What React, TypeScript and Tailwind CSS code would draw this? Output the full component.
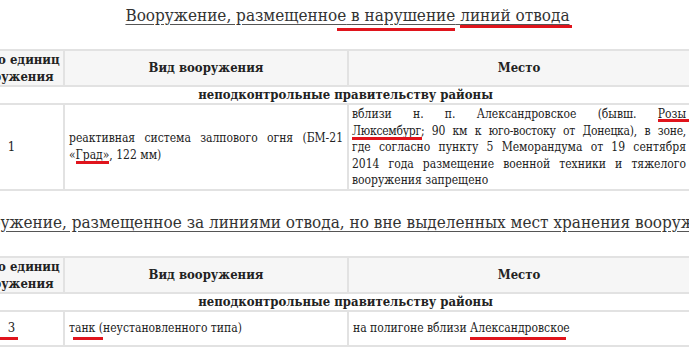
import React from 'react';

type Row = { count: React.ReactNode; kind: React.ReactNode; place: React.ReactNode; tall?: boolean };

// red marker lines drawn over the text
function Mark({ children, line }: { children: React.ReactNode; line: string }) {
  return (
    <span className="relative">
      {children}
      <span className={`absolute h-[3px] bg-[#e0141c] ${line}`} />
    </span>
  );
}

// one justified line of a cell
function J({ children, tight }: { children: React.ReactNode; tight?: boolean }) {
  return (
    <span className={tight ? 'block whitespace-nowrap tracking-[-0.25px] text-justify [text-align-last:justify]' : 'block text-justify [text-align-last:justify]'}>
      {children}
    </span>
  );
}

function Title({ children }: { children: React.ReactNode }) {
  return (
    <div className="flex justify-center pl-[6px]">
      <h2 className="shrink-0 whitespace-nowrap text-[17px] leading-[22px] text-[#333] underline underline-offset-[3px] decoration-[#555]">
        {children}
      </h2>
    </div>
  );
}

function ArmsTable({ row }: { row: Row }) {
  const cell = 'border-2 border-[#e2e2e2]';
  return (
    <div className="-ml-[42px]">
      <table className="w-[731px] table-fixed border-collapse text-[12px] text-[#222]">
        <colgroup>
          <col className="w-[105px]" />
          <col className="w-[284px]" />
          <col className="w-[342px]" />
        </colgroup>
        <thead>
          <tr className="h-[35px] bg-[#f6f6f6] text-[13px]">
            <th className={`${cell} p-0 text-center font-bold leading-[17px]`}>
              Число единиц
              <br />
              вооружения
            </th>
            <th className={`${cell} p-0 text-center font-bold`}>Вид вооружения</th>
            <th className={`${cell} p-0 text-center font-bold`}>Место</th>
          </tr>
        </thead>
        <tbody>
          <tr className="h-[18px] text-[13px]">
            <td colSpan={3} className="p-0 pl-[42px] text-center font-bold leading-[16px]">
              неподконтрольные правительству районы
            </td>
          </tr>
          <tr className={row.tall ? '' : 'h-[35px]'}>
            <td className={`${cell} p-0 text-center align-middle text-[13px]`}>{row.count}</td>
            <td className={`${cell} px-[4px] py-0 align-middle leading-[16.5px]`}>{row.kind}</td>
            <td className={`${cell} px-[3px] pt-[1px] pb-0 align-middle leading-[16.5px]`}>{row.place}</td>
          </tr>
        </tbody>
      </table>
    </div>
  );
}

export default function App() {
  return (
    <div className="w-[689px] h-[349px] overflow-hidden bg-white font-['DejaVu_Serif_Condensed','DejaVu_Serif',serif] font-stretch-condensed">
      <div className="pt-[4px]">
        <Title>
          Вооружение, размещенное{' '}
          <Mark line="-left-[14px] right-0 -bottom-[6px]">в нарушение</Mark>{' '}
          <Mark line="left-0 -right-[2px] -bottom-[3px]">линий отвода</Mark>
        </Title>
      </div>

      <div className="mt-[23px]">
        <ArmsTable
          row={{
            tall: true,
            count: '1',
            kind: (
              <>
                <J>реактивная система залпового огня (БМ-21</J>
                <span className="block">
                  «<Mark line="left-0 right-0 -bottom-[2px]">Град»</Mark>, 122 мм)
                </span>
              </>
            ),
            place: (
              <>
                <J>
                  вблизи н. п. Александровское (бывш.{' '}
                  <Mark line="left-0 -right-[8px] -bottom-[1px]">Розы</Mark>
                </J>
                <J tight>
                  <Mark line="left-0 right-[2px] -bottom-[2px]">Люксембург;</Mark> 90 км к юго-востоку от Донецка), в зоне,
                </J>
                <J>где согласно пункту 5 Меморандума от 19 сентября</J>
                <J>2014 года размещение военной техники и тяжелого</J>
                <span className="block">вооружения запрещено</span>
              </>
            ),
          }}
        />
      </div>

      <div className="mt-[20px]">
        <Title>Вооружение, размещенное за линиями отвода, но вне выделенных мест хранения вооружения</Title>
      </div>

      <div className="mt-[23px]">
        <ArmsTable
          row={{
            count: <Mark line="-left-[8px] -right-[3px] -bottom-[5px]">3</Mark>,
            kind: (
              <span>
                <Mark line="left-[4px] right-0 -bottom-[5px]">танк (</Mark>неустановленного типа)
              </span>
            ),
            place: (
              <span className="pl-[1px]">
                на полигоне вблизи <Mark line="left-0 right-[4px] -bottom-[5px]">Александровское</Mark>
              </span>
            ),
          }}
        />
      </div>
    </div>
  );
}
